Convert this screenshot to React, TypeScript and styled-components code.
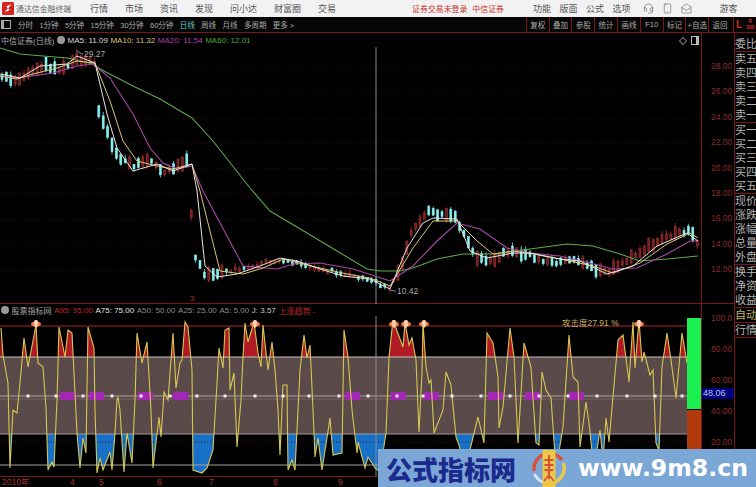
import { Headset, Smartphone, MailOpen } from 'lucide-react';
import styled, { createGlobalStyle } from 'styled-components';

type Pt = [number, number];

const GlobalStyle = createGlobalStyle`
  html, body {
    margin: 0;
    padding: 0;
    background: #000;
    font-family: "Liberation Sans", "Noto Sans CJK SC", sans-serif;
  }
  * { box-sizing: border-box; }
`;

const Page = styled.div`
  position: relative;
  width: 756px;
  height: 487px;
  background: #000;
  overflow: hidden;
`;

const TitleBar = styled.div`
  height: 17px;
  background: #f2f2f2;
  display: flex;
  align-items: center;
  font-size: 9px;
  color: #555;
  padding-left: 2px;
`;

const Brand = styled.div`
  display: flex;
  align-items: center;
  gap: 2px;
  width: 88px;
  font-size: 7.9px;
  color: #666;
`;

const Menu = styled.div<{ $gap: number; $left?: number }>`
  display: flex;
  align-items: center;
  gap: ${(p) => p.$gap}px;
  margin-left: ${(p) => p.$left ?? 0}px;
  white-space: nowrap;
`;

const Warn = styled.span`
  color: #c8322c;
  font-size: 7.9px;
`;

const Toolbar = styled.div`
  height: 16px;
  display: flex;
  align-items: stretch;
  background: #060606;
  border-bottom: 1px solid #7a1818;
  font-size: 7.5px;
  color: #a8a8a8;
`;

const PeriodBox = styled.div`
  width: 10px;
  height: 9px;
  margin: 3px 4px 0 1px;
  border: 1px solid #aaa;
  border-left-width: 3px;
`;

const Periods = styled.div`
  display: flex;
  align-items: center;
  gap: 6.4px;
  padding-left: 3px;
  white-space: nowrap;
`;

const Period = styled.span<{ $active?: boolean }>`
  color: ${(p) => (p.$active ? '#62c6c0' : '#a8a8a8')};
`;

const Tools = styled.div`
  margin-left: auto;
  display: flex;
  align-items: stretch;
`;

const Tool = styled.div`
  width: 22.8px;
  border-left: 1px solid #7a1818;
  display: flex;
  align-items: center;
  justify-content: center;
  white-space: nowrap;
`;

const SideHead = styled.div`
  width: 23px;
  margin-left: 2px;
  border-left: 1px solid #7a1818;
  display: flex;
  gap: 4px;
  padding-left: 2px;
  color: #d02a2a;
  font-weight: bold;
`;

const SideL = styled.span`
  font-size: 10px;
  line-height: 15px;
`;

const SideR = styled.span`
  font-size: 5px;
  line-height: 6px;
  padding-top: 1px;
  text-align: center;
`;

const Body = styled.div`
  display: flex;
  height: 454px;
`;

const ChartCol = styled.div`
  width: 701px;
  flex: none;
  display: flex;
  flex-direction: column;
`;

const PricePane = styled.div`
  position: relative;
  height: 271px;
  border-bottom: 1px solid #7a1818;
`;

const Legend = styled.div<{ $h: number }>`
  height: ${(p) => p.$h}px;
  display: flex;
  align-items: center;
  gap: 2.6px;
  padding-left: 1px;
  font-size: 8px;
  white-space: nowrap;
`;

const Dot = styled.span`
  width: 8px;
  height: 8px;
  border-radius: 50%;
  background: #9a9a9a;
`;

const LegendItem = styled.span<{ $color: string }>`
  color: ${(p) => p.$color};
`;

const CornerIcons = styled.div`
  position: absolute;
  top: 3px;
  right: 2px;
  display: flex;
  align-items: center;
  gap: 5px;
`;

const Diamond = styled.span`
  width: 6px;
  height: 6px;
  border: 1px solid #777;
  transform: rotate(45deg);
`;

const PaneBox = styled.span`
  width: 8px;
  height: 9px;
  border: 1px solid #bbb;
  border-right-width: 3px;
`;

const ChartSvg = styled.svg`
  display: block;
`;

const ChartText = styled.text<{ $color: string; $size?: number }>`
  fill: ${(p) => p.$color};
  font-size: ${(p) => p.$size ?? 8.5}px;
  font-family: "Liberation Sans", "Noto Sans CJK SC", sans-serif;
`;

const IndPane = styled.div`
  flex: 1;
  display: flex;
  flex-direction: column;
`;

const DateAxis = styled.div`
  height: 11px;
  border-top: 1px solid #7a1818;
  display: flex;
  padding-left: 2px;
  font-size: 8.5px;
  line-height: 11px;
  color: #a83030;
`;

const DateTick = styled.span<{ $w: number }>`
  width: ${(p) => p.$w}px;
  flex: none;
`;

const AxisCol = styled.div`
  width: 34px;
  flex: none;
  border-left: 1px solid #7a1818;
  border-right: 1px solid #7a1818;
  display: flex;
  flex-direction: column;
`;

const PriceAxis = styled.div`
  height: 271px;
  flex: none;
  padding-top: 28px;
  border-bottom: 1px solid #7a1818;
  display: flex;
  flex-direction: column;
  gap: 15.4px;
`;

const IndAxis = styled.div`
  position: relative;
  flex: 1;
  padding-top: 9px;
  display: flex;
  flex-direction: column;
  gap: 21px;
`;

const AxisLabel = styled.div`
  height: 10px;
  flex: none;
  line-height: 10px;
  padding-left: 9px;
  font-size: 8.5px;
  color: #8c2c2c;
`;

const LastValue = styled.div`
  position: absolute;
  top: 84px;
  left: 0;
  right: 0;
  height: 11px;
  line-height: 11px;
  background: #00007c;
  color: #b8c8f0;
  font-size: 9px;
  padding-left: 1px;
`;

const SideCol = styled.div`
  flex: 1;
  overflow: hidden;
  font-size: 11px;
  color: #b4b4b4;
`;

const SideGroup = styled.div<{ $top?: number }>`
  padding-top: ${(p) => p.$top ?? 0}px;
  border-bottom: 1px solid #7a1818;
`;

const SideRow = styled.div<{ $warm?: boolean }>`
  height: 14px;
  line-height: 14px;
  white-space: nowrap;
  color: ${(p) => (p.$warm ? '#c8b060' : '#b4b4b4')};
`;

const Watermark = styled.div`
  position: absolute;
  left: 378px;
  right: 0;
  bottom: 0;
  height: 38px;
  background: #7ba7d6;
  display: flex;
  align-items: center;
  padding-left: 8px;
`;

const MarkName = styled.div`
  width: 144px;
  flex: none;
  font-size: 26px;
  font-weight: 900;
  color: #1c2a8e;
  font-family: "Noto Sans CJK SC", sans-serif;
  white-space: nowrap;
`;

const MarkUrl = styled.div`
  margin-left: 10px;
  font-size: 23.6px;
  font-weight: bold;
  color: #fff;
  font-family: "DejaVu Sans", sans-serif;
  white-space: nowrap;
`;

const lerp = (pts: Pt[], x: number) => {
  for (let i = 1; i < pts.length; i++) {
    if (x <= pts[i][0]) {
      const [x0, y0] = pts[i - 1];
      const [x1, y1] = pts[i];
      return y0 + ((y1 - y0) * (x - x0)) / (x1 - x0 || 1);
    }
  }
  return pts[pts.length - 1][1];
};

const toPath = (pts: Pt[]) => pts.map((p) => p.join(',')).join(' ');

const ma60: Pt[] = [[0,47],[20,53],[43,55],[67,57],[93,63],[100,68],[133,85],[160,98],[192,117],[213,140],[250,187],[270,210],[307,232],[337,250],[367,268],[380,270],[400,270],[413,267],[437,258],[463,253],[497,253],[530,248],[567,243],[593,245],[620,253],[640,260],[667,258],[698,255]];
const ma20: Pt[] = [[0,75],[17,77],[53,72],[77,65],[93,63],[110,77],[133,113],[150,147],[163,162],[177,168],[192,165],[203,190],[243,265],[277,268],[293,263],[320,262],[353,268],[390,280],[413,265],[437,240],[457,222],[480,228],[507,247],[530,252],[560,255],[590,262],[613,268],[637,267],[667,253],[690,240],[698,240]];
const ma10: Pt[] = [[0,75],[17,78],[33,73],[57,67],[77,60],[95,62],[110,100],[123,140],[137,160],[157,165],[173,168],[192,163],[200,190],[220,270],[243,273],[263,267],[283,258],[303,263],[320,267],[347,273],[370,277],[390,285],[413,247],[433,220],[457,220],[477,240],[493,253],[513,250],[533,253],[560,258],[593,265],[613,272],[640,262],[667,243],[690,232],[698,237]];
const ma5: Pt[] = [[0,73],[20,77],[40,65],[67,63],[77,55],[95,62],[107,113],[117,147],[133,170],[157,163],[173,170],[192,163],[197,190],[205,265],[217,276],[237,273],[260,265],[280,257],[297,260],[320,268],[343,275],[370,278],[390,288],[407,247],[423,222],[433,217],[457,218],[470,250],[487,257],[513,252],[530,252],[560,258],[580,260],[607,273],[633,265],[657,245],[687,232],[698,240]];
const price: Pt[] = [[0,75],[15,80],[30,72],[45,64],[60,70],[75,58],[97,62],[99,115],[105,125],[112,145],[120,160],[135,165],[150,160],[165,170],[190,160],[192,248],[200,265],[205,275],[220,272],[260,263],[280,258],[300,263],[320,268],[345,273],[370,280],[390,287],[400,270],[410,235],[420,220],[430,210],[445,215],[455,217],[465,235],[475,255],[490,260],[510,250],[530,255],[550,262],[570,258],[590,265],[605,272],[620,265],[640,250],[650,245],[670,235],[690,228],[698,243]];

const jLine: Pt[] = [[1,328],[3,355],[8,383],[10,468],[13,410],[17,413],[20,383],[24,338],[28,367],[36,325],[38,363],[43,367],[46,408],[48,470],[52,462],[54,467],[57,400],[59,327],[65,357],[68,330],[72,333],[74,373],[77,433],[80,468],[83,438],[86,453],[88,327],[94,348],[95,410],[97,473],[100,458],[103,470],[110,452],[112,470],[115,433],[117,400],[118,397],[120,410],[124,472],[127,433],[132,463],[135,400],[137,333],[142,363],[147,342],[151,410],[153,468],[159,417],[161,437],[164,392],[168,400],[173,333],[176,388],[180,363],[182,360],[185,322],[188,327],[192,370],[193,470],[202,473],[207,468],[213,450],[217,383],[219,348],[223,368],[225,330],[229,328],[230,390],[234,373],[237,447],[241,400],[243,357],[245,323],[248,342],[254,322],[258,353],[261,367],[263,325],[268,370],[272,342],[275,370],[278,410],[280,455],[283,385],[287,385],[288,470],[292,460],[295,470],[300,370],[304,335],[307,358],[310,345],[313,410],[315,457],[318,438],[322,470],[330,418],[333,455],[342,453],[344,330],[348,357],[352,410],[357,453],[358,442],[365,468],[368,457],[375,468],[380,472],[386,433],[389,357],[393,320],[403,347],[405,322],[409,345],[412,338],[416,360],[419,432],[422,372],[423,323],[426,367],[429,383],[431,380],[434,433],[443,410],[446,372],[451,385],[456,437],[459,445],[465,470],[478,417],[484,443],[487,333],[493,343],[498,377],[499,428],[503,407],[510,328],[514,357],[518,443],[524,343],[531,367],[536,443],[539,445],[542,372],[546,390],[551,398],[556,470],[563,427],[569,335],[573,377],[578,382],[580,447],[586,402],[589,423],[594,470],[600,430],[603,460],[606,418],[609,442],[618,340],[623,335],[629,382],[633,322],[635,368],[639,320],[642,362],[644,352],[650,375],[653,370],[656,443],[659,450],[662,367],[667,333],[671,360],[676,398],[682,333],[687,363]];

// small seeded generator so the candles stay the same between runs
const seeded = (start: number) => {
  let s = start;
  return () => {
    s = (s * 16807) % 2147483647;
    return s / 2147483647;
  };
};

const buildCandles = () => {
  const rnd = seeded(4711);
  const list: { x: number; top: number; bottom: number; hi: number; lo: number; up: boolean }[] = [];
  for (let x = 2; x < 699; x += 4.4) {
    const y = lerp(price, x);
    const slope = lerp(price, x + 4.4) - y;
    const size = x > 225 && x < 395 ? 1.5 : 2 + rnd() * 5;
    const up = slope < -1 ? rnd() < 0.85 : slope > 1 ? rnd() < 0.2 : rnd() < 0.5;
    const mid = y + (rnd() - 0.5) * 4;
    const top = mid - size;
    const bottom = mid + size;
    list.push({ x, top, bottom, hi: top - rnd() * 4, lo: bottom + rnd() * 3, up });
  }
  return list;
};

const candles = buildCandles();
const priceLevels = [66, 92, 117, 142, 168, 193, 219, 244, 269];
const whiteDots = [28, 56, 83, 112, 141, 170, 197, 225, 255, 283, 309, 339, 368, 397, 423, 452, 481, 510, 539, 568, 597, 627, 655, 682];
const badges = [60, 89, 138, 173, 345, 391, 424, 488, 525, 569];
const flowers = [36, 255, 394, 406, 424, 639];
const jArea = toPath([...jLine, [687, 357], [0, 357]]);
const jAreaLow = toPath([...jLine, [687, 434], [0, 434]]);

const Flower = ({ x }: { x: number }) => (
  <g>
    <ellipse cx={x} cy={324} rx={5} ry={2.6} fill="#e8743c" />
    <ellipse cx={x} cy={323.5} rx={2.4} ry={3.4} fill="#f8c0a0" />
    <rect x={x - 0.5} y={320} width={1} height={8} fill="#ffe8c8" />
  </g>
);

const PriceChart = () => (
  <ChartSvg width={701} height={257} viewBox="0 46 701 257">
    {priceLevels.map((y) => (
      <line key={y} x1={0} x2={701} y1={y} y2={y} stroke="#3a0a0a" strokeDasharray="1 2" />
    ))}
    <line x1={376} x2={376} y1={46} y2={303} stroke="#8c8c8c" />
    {candles.map((c) => (
      <g key={c.x} stroke={c.up ? '#a83232' : '#86f0ee'}>
        <line x1={c.x} x2={c.x} y1={c.hi} y2={c.lo} strokeWidth={0.8} />
        <rect
          x={c.x - 1}
          y={c.top}
          width={2}
          height={c.bottom - c.top}
          fill={c.up ? '#6a1c1c' : '#86f0ee'}
          strokeWidth={0.6}
        />
      </g>
    ))}
    <polyline points={toPath(ma60)} fill="none" stroke="#5ea84a" strokeWidth={1.1} />
    <polyline points={toPath(ma20)} fill="none" stroke="#a848a8" strokeWidth={1.1} />
    <polyline points={toPath(ma10)} fill="none" stroke="#d8c878" strokeWidth={1} />
    <polyline points={toPath(ma5)} fill="none" stroke="#e8e4dc" strokeWidth={1} />
    <polyline points="76,49 80,52 83,53" fill="none" stroke="#aaa" strokeWidth={0.8} />
    <ChartText x={84} y={56} $color="#a8a8a8">29.27</ChartText>
    <polyline points="390,289 394,290 396,290" fill="none" stroke="#aaa" strokeWidth={0.8} />
    <ChartText x={397} y={293} $color="#a8a8a8">10.42</ChartText>
    <ChartText x={190} y={300} $color="#c02828" $size={8}>3</ChartText>
  </ChartSvg>
);

const IndicatorChart = () => (
  <ChartSvg width={701} height={160} viewBox="0 316 701 160">
    <defs>
      <clipPath id="overBought">
        <rect x={0} y={300} width={701} height={57} />
      </clipPath>
      <clipPath id="overSold">
        <rect x={0} y={434} width={701} height={60} />
      </clipPath>
    </defs>
    <rect x={0} y={357} width={687} height={77} fill="#5a4a4a" />
    <polygon points={jArea} fill="#b01a24" clipPath="url(#overBought)" />
    <polygon points={jAreaLow} fill="#1670c8" clipPath="url(#overSold)" />
    <line x1={0} x2={687} y1={442} y2={442} stroke="#4a1010" strokeDasharray="1 2" />
    <line x1={0} x2={687} y1={326} y2={326} stroke="#a8242c" />
    <line x1={0} x2={687} y1={357} y2={357} stroke="#c8c0c0" strokeWidth={1.2} />
    <line x1={0} x2={687} y1={396} y2={396} stroke="#a8a0a0" />
    <line x1={0} x2={687} y1={399} y2={399} stroke="#7a6060" />
    <line x1={0} x2={687} y1={434} y2={434} stroke="#a09a9a" />
    <line x1={0} x2={687} y1={465} y2={465} stroke="#a8a498" />
    <line x1={376} x2={376} y1={316} y2={476} stroke="#8c8c8c" />
    {badges.map((x) => (
      <rect key={x} x={x} y={392} width={15} height={8} fill="#a426b4" />
    ))}
    <polyline points={toPath(jLine)} fill="none" stroke="#d6c850" strokeWidth={1.1} />
    {whiteDots.map((x) => (
      <rect key={x} x={x - 1.5} y={394.5} width={3} height={3} fill="#eee" />
    ))}
    {flowers.map((x) => (
      <Flower key={x} x={x} />
    ))}
    <ChartText x={562} y={326} $color="#c8b060">攻击度27.91 %</ChartText>
    <rect x={687} y={318} width={14} height={91} fill="#1cf050" />
    <rect x={687} y={410} width={14} height={66} fill="#b03a0c" />
  </ChartSvg>
);

const AppLogo = () => (
  <svg width={12} height={13} viewBox="0 0 12 13">
    <rect width={12} height={13} rx={1.5} fill="#d42420" />
    <path d="M9.5 2 L4 4.5 L6 6 L2.5 10.5 L8 7.8 L6.2 6.4 Z" fill="#fff" />
  </svg>
);

const WatermarkLogo = () => (
  <svg width={38} height={38} viewBox="0 0 38 38">
    <path d="M4 22 A 15.5 15.5 0 0 1 32 11" fill="none" stroke="#d8503c" strokeWidth={3.4} />
    <path d="M33.5 14 A 15.5 15.5 0 0 1 22 34" fill="none" stroke="#ecc848" strokeWidth={3.4} />
    <path d="M16 34 A 15.5 15.5 0 0 1 4.5 25" fill="none" stroke="#d8e8f4" strokeWidth={3} />
    <rect x={12.5} y={1} width={13} height={37} fill="#ecc848" />
    <rect x={14.5} y={10} width={9} height={2} fill="#d8503c" />
    <rect x={14.5} y={15} width={9} height={2} fill="#d8503c" />
    <rect x={14.5} y={20} width={9} height={2} fill="#d8503c" />
    <rect x={18} y={6} width={2} height={24} fill="#d8503c" />
    <path d="M14 32 L19 26 L24 32" fill="none" stroke="#d8503c" strokeWidth={1.6} />
  </svg>
);

export default function App() {
  return (
    <Page>
      <GlobalStyle />
      <TitleBar>
        <Brand>
          <AppLogo />
          通达信金融终端
        </Brand>
        <Menu $gap={17}>
          <span>行情</span>
          <span>市场</span>
          <span>资讯</span>
          <span>发现</span>
          <span>问小达</span>
          <span>财富圈</span>
          <span>交易</span>
        </Menu>
        <Menu $gap={5} $left={76}>
          <Warn>证券交易未登录</Warn>
          <Warn>中信证券</Warn>
        </Menu>
        <Menu $gap={8.5} $left={29}>
          <span>功能</span>
          <span>版面</span>
          <span>公式</span>
          <span>选项</span>
        </Menu>
        <Menu $gap={8} $left={12}>
          <Headset size={11} strokeWidth={1.2} />
          <Smartphone size={11} strokeWidth={1.2} />
          <MailOpen size={11} strokeWidth={1.2} />
        </Menu>
        <Menu $gap={0} $left={28}>
          <span>游客</span>
        </Menu>
      </TitleBar>

      <Toolbar>
        <PeriodBox />
        <Periods>
          <Period>分时</Period>
          <Period>1分钟</Period>
          <Period>5分钟</Period>
          <Period>15分钟</Period>
          <Period>30分钟</Period>
          <Period>60分钟</Period>
          <Period $active>日线</Period>
          <Period>周线</Period>
          <Period>月线</Period>
          <Period>多周期</Period>
          <Period>更多 &gt;</Period>
        </Periods>
        <Tools>
          <Tool>复权</Tool>
          <Tool>叠加</Tool>
          <Tool>参股</Tool>
          <Tool>统计</Tool>
          <Tool>画线</Tool>
          <Tool>F10</Tool>
          <Tool>标记</Tool>
          <Tool>+自选</Tool>
          <Tool>返回</Tool>
          <SideHead>
            <SideL>L</SideL>
            <SideR>
              R
              <br />
              300
            </SideR>
          </SideHead>
        </Tools>
      </Toolbar>

      <Body>
        <ChartCol>
          <PricePane>
            <Legend $h={14}>
              <LegendItem $color="#a8a8a8">中信证券(日线)</LegendItem>
              <Dot />
              <LegendItem $color="#d8d8d8">MA5: 11.09</LegendItem>
              <LegendItem $color="#d8c878">MA10: 11.32</LegendItem>
              <LegendItem $color="#b040b0">MA20: 11.54</LegendItem>
              <LegendItem $color="#4aa838">MA60: 12.01</LegendItem>
            </Legend>
            <CornerIcons>
              <Diamond />
              <PaneBox />
            </CornerIcons>
            <PriceChart />
          </PricePane>
          <IndPane>
            <Legend $h={12}>
              <Dot />
              <LegendItem $color="#a8a8a8">股票指标网</LegendItem>
              <LegendItem $color="#c02828">A95: 95.00</LegendItem>
              <LegendItem $color="#e0e0e0">A75: 75.00</LegendItem>
              <LegendItem $color="#8c8c8c">A50: 50.00</LegendItem>
              <LegendItem $color="#8c8c8c">A25: 25.00</LegendItem>
              <LegendItem $color="#8c8c8c">A5: 5.00</LegendItem>
              <LegendItem $color="#c8c8c8">J: 3.57</LegendItem>
              <LegendItem $color="#c02828">上涨趋势 -</LegendItem>
            </Legend>
            <IndicatorChart />
            <DateAxis>
              <DateTick $w={68}>2010年</DateTick>
              <DateTick $w={29}>4</DateTick>
              <DateTick $w={58}>5</DateTick>
              <DateTick $w={52}>6</DateTick>
              <DateTick $w={64}>7</DateTick>
              <DateTick $w={65}>8</DateTick>
              <DateTick $w={20}>9</DateTick>
            </DateAxis>
          </IndPane>
        </ChartCol>

        <AxisCol>
          <PriceAxis>
            {['28.00', '26.00', '24.00', '22.00', '20.00', '18.00', '16.00', '14.00', '12.00'].map((t) => (
              <AxisLabel key={t}>{t}</AxisLabel>
            ))}
          </PriceAxis>
          <IndAxis>
            {['100.0', '80.00', '60.00', '40.00', '20.00'].map((t) => (
              <AxisLabel key={t}>{t}</AxisLabel>
            ))}
            <LastValue>48.06</LastValue>
          </IndAxis>
        </AxisCol>

        <SideCol>
          <SideGroup $top={4}>
            <SideRow>委比</SideRow>
          </SideGroup>
          <SideGroup>
            {['卖五', '卖四', '卖三', '卖二', '卖一'].map((t) => (
              <SideRow key={t}>{t}</SideRow>
            ))}
          </SideGroup>
          <SideGroup>
            {['买一', '买二', '买三', '买四', '买五'].map((t) => (
              <SideRow key={t}>{t}</SideRow>
            ))}
          </SideGroup>
          <SideGroup>
            {['现价', '涨跌', '涨幅', '总量', '外盘'].map((t) => (
              <SideRow key={t}>{t}</SideRow>
            ))}
          </SideGroup>
          <SideGroup>
            {['换手', '净资', '收益'].map((t) => (
              <SideRow key={t}>{t}</SideRow>
            ))}
          </SideGroup>
          <SideGroup>
            <SideRow $warm>自动</SideRow>
          </SideGroup>
          <SideGroup>
            <SideRow>行情</SideRow>
          </SideGroup>
        </SideCol>
      </Body>

      <Watermark>
        <MarkName>公式指标网</MarkName>
        <WatermarkLogo />
        <MarkUrl>www.9m8.cn</MarkUrl>
      </Watermark>
    </Page>
  );
}
